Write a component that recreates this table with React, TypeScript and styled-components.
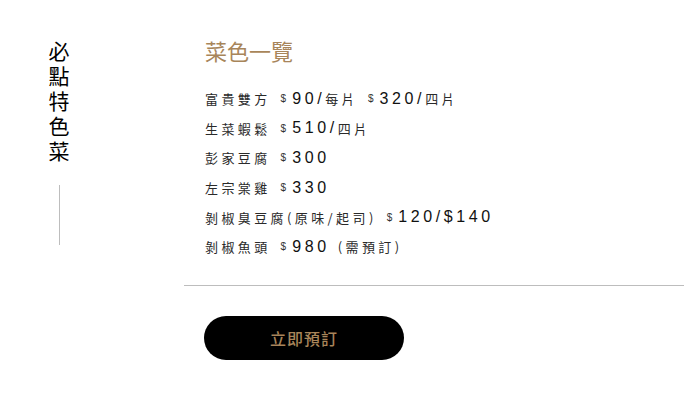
import React from "react";
import styled, { createGlobalStyle } from "styled-components";

const Global = createGlobalStyle`
  html, body { margin: 0; padding: 0; background: #fff; }
  body { font-family: "Noto Sans CJK TC", "Noto Sans", sans-serif; }
`;

const Page = styled.div`
  display: flex;
  width: 684px;
  height: 419px;
  background: #fff;
  overflow: hidden;
`;

const Side = styled.aside`
  width: 118px;
  flex: none;
  display: flex;
  flex-direction: column;
  align-items: center;
  padding-top: 41px;
  margin-right: 66px;
`;

const VerticalTitle = styled.h2`
  margin: 0;
  writing-mode: vertical-rl;
  font-family: "Noto Sans CJK TC", sans-serif;
  font-weight: 400;
  font-size: 21px;
  line-height: 24px;
  letter-spacing: 4px;
  color: #000;
`;

const VLine = styled.div`
  width: 1px;
  height: 60px;
  margin-top: 19px;
  background: #bdbdbd;
`;

const Main = styled.main`
  flex: 1;
  display: flex;
  flex-direction: column;
  padding-top: 33px;
`;

const Content = styled.div`
  padding-left: 21px;
`;

const Title = styled.h1`
  margin: 0 0 17px;
  font-family: "Noto Sans CJK TC", sans-serif;
  font-weight: 400;
  font-size: 22px;
  line-height: 34px;
  color: #a8855a;
`;

const List = styled.ul`
  list-style: none;
  margin: 0;
  padding: 0;
`;

const Row = styled.li`
  height: 29.6px;
  display: flex;
  align-items: center;
  white-space: pre;
  color: #222;
`;

const Cjk = styled.span`
  font-family: "Noto Sans CJK TC", sans-serif;
  font-size: 13px;
  letter-spacing: 3.4px;
  color: #2a2a2a;
`;

const Dollar = styled.span`
  font-family: "Liberation Sans", sans-serif;
  font-size: 10px;
  margin: 0 6px 0 10px;
  color: #333;
`;

const Num = styled.span`
  font-family: "Liberation Sans", sans-serif;
  font-size: 16px;
  letter-spacing: 3.6px;
  color: #111;
`;

const Divider = styled.hr`
  margin: 23px 0 0;
  border: none;
  border-top: 1px solid #bdbdbd;
  width: 100%;
`;

const Button = styled.button`
  margin: 30px 0 0 20px;
  width: 200px;
  height: 44px;
  border: none;
  border-radius: 22px;
  background: #000;
  color: #a8855a;
  font-family: "Noto Sans CJK TC", sans-serif;
  font-size: 16px;
  font-weight: 500;
  letter-spacing: 1px;
  cursor: pointer;
`;

const Price = ({ v }: { v: string }) => (
  <>
    <Dollar>$</Dollar>
    <Num>{v}</Num>
  </>
);

export default function App() {
  return (
    <>
      <Global />
      <Page>
        <Side>
          <VerticalTitle>必點特色菜</VerticalTitle>
          <VLine />
        </Side>
        <Main>
          <Content>
            <Title>菜色一覽</Title>
            <List>
              <Row>
                <Cjk>富貴雙方</Cjk>
                <Price v="90/" />
                <Cjk>每片</Cjk>
                <Price v="320/" />
                <Cjk>四片</Cjk>
              </Row>
              <Row>
                <Cjk>生菜蝦鬆</Cjk>
                <Price v="510/" />
                <Cjk>四片</Cjk>
              </Row>
              <Row>
                <Cjk>彭家豆腐</Cjk>
                <Price v="300" />
              </Row>
              <Row>
                <Cjk>左宗棠雞</Cjk>
                <Price v="330" />
              </Row>
              <Row>
                <Cjk>剝椒臭豆腐(原味/起司)</Cjk>
                <Price v="120/$140" />
              </Row>
              <Row>
                <Cjk>剝椒魚頭</Cjk>
                <Price v="980 " />
                <Cjk>(需預訂)</Cjk>
              </Row>
            </List>
          </Content>
          <Divider />
          <Button>立即預訂</Button>
        </Main>
      </Page>
    </>
  );
}
